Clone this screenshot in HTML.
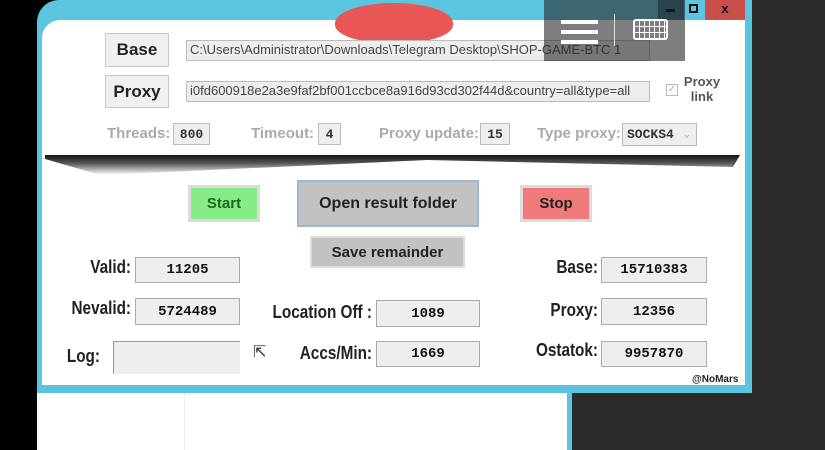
<!DOCTYPE html>
<html><head><meta charset="utf-8"><style>
*{margin:0;padding:0;box-sizing:border-box}
body{width:825px;height:450px;overflow:hidden;background:#000;position:relative;font-family:"Liberation Sans",Arial,sans-serif}
.a{position:absolute}
.btn{position:absolute;background:#f0f0f0;border:1px solid #c8c8c8;font-weight:bold;color:#222;display:flex;align-items:center;justify-content:center}
.inp{position:absolute;background:#ededed;border:1px solid #bbb;font-size:13px;color:#444;line-height:18px;padding-left:3px;white-space:nowrap;overflow:hidden}
.lbl{position:absolute;color:#aaa;font-weight:bold;font-size:15px}
.sm{position:absolute;background:#eee;border:1px solid #bbb;font-family:"Liberation Mono",monospace;font-weight:bold;font-size:13px;color:#333;display:flex;align-items:center;justify-content:center}
.big{position:absolute;font-size:18px;font-weight:bold;color:#222;transform:scaleX(0.85);transform-origin:right center;text-align:right;white-space:nowrap}
.num{position:absolute;background:#eee;border:1px solid #aaa;font-family:"Liberation Mono",monospace;font-weight:bold;font-size:14px;color:#111;display:flex;align-items:center;justify-content:center}
</style></head><body>
<div class="a" style="left:570px;top:0;width:255px;height:450px;background:#2b2a2b"></div>
<div class="a" style="left:37px;top:0;width:715px;height:393px;background:#5bc4de;border-radius:22px 0 0 0"></div>
<div class="a" style="left:42px;top:20px;width:703px;height:365px;background:#fff;border-radius:18px 0 0 0"></div>
<div class="a" style="left:37px;top:393px;width:535px;height:57px;background:#fff;border-right:5px solid #5bc4de"></div>
<div class="a" style="left:184px;top:393px;width:1px;height:57px;background:#eee"></div>
<div class="a" style="left:335px;top:3px;width:118px;height:40px;background:#e85656;border-radius:50% 50% 45% 45%"></div>

<div class="btn" style="left:105px;top:33px;width:64px;height:34px;font-size:17px">Base</div>
<div class="btn" style="left:105px;top:75px;width:64px;height:33px;font-size:17px">Proxy</div>
<div class="inp" style="left:186px;top:40px;width:464px;height:21px">C:\Users\Administrator\Downloads\Telegram Desktop\SHOP-GAME-BTC 1</div>
<div class="inp" style="left:186px;top:81px;width:464px;height:21px">i0fd600918e2a3e9faf2bf001ccbce8a916d93cd302f44d&amp;country=all&amp;type=all</div>
<div class="a" style="left:666px;top:84px;width:12px;height:12px;border:1px solid #bbb;color:#aaa;font-size:10px;line-height:10px;text-align:center">✓</div>
<div class="a" style="left:682px;top:74px;width:40px;color:#555;font-size:13px;font-weight:bold;text-align:center;line-height:15px">Proxy<br>link</div>

<div class="lbl" style="left:107px;top:125px">Threads:</div>
<div class="sm" style="left:173px;top:123px;width:37px;height:22px">800</div>
<div class="lbl" style="left:251px;top:125px">Timeout:</div>
<div class="sm" style="left:318px;top:123px;width:23px;height:22px">4</div>
<div class="lbl" style="left:379px;top:125px">Proxy update:</div>
<div class="sm" style="left:480px;top:123px;width:30px;height:22px">15</div>
<div class="lbl" style="left:537px;top:125px">Type proxy:</div>
<div class="sm" style="left:622px;top:123px;width:75px;height:23px;justify-content:flex-start;padding-left:4px">SOCKS4 <span style="color:#aaa;margin-left:10px;font-size:10px">⌄</span></div>

<div class="a" style="left:45px;top:155px;width:695px;height:20px;background:linear-gradient(#111,#555 40%,#fff);clip-path:polygon(0 0,100% 0,99% 60%,55% 25%,8% 100%,0 20%)"></div>

<div class="btn" style="left:188px;top:185px;width:72px;height:37px;background:#86ec86;border:3px solid #dcdcdc;color:#1b6a1b;font-size:15px">Start</div>
<div class="btn" style="left:297px;top:180px;width:182px;height:47px;background:#c2c2c2;border:2px solid #9ab8d8;font-size:16px">Open result folder</div>
<div class="btn" style="left:520px;top:185px;width:72px;height:37px;background:#f07a7a;border:3px solid #dcdcdc;font-size:15px">Stop</div>
<div class="btn" style="left:310px;top:236px;width:155px;height:32px;background:#c2c2c2;border:2px solid #ddd;font-size:15px">Save remainder</div>

<div class="big" style="right:694px;top:257px">Valid:</div>
<div class="num" style="left:135px;top:257px;width:105px;height:26px">11205</div>
<div class="big" style="right:694px;top:298px">Nevalid:</div>
<div class="num" style="left:135px;top:298px;width:105px;height:27px">5724489</div>
<div class="big" style="right:725px;top:346px">Log:</div>
<div class="a" style="left:113px;top:341px;width:127px;height:33px;background:#eee;border:1px solid #999;border-right:none;border-bottom:none"></div>
<div class="a" style="left:253px;top:342px;font-size:16px;color:#333">⇱</div>
<div class="big" style="right:453px;top:302px">Location Off :</div>
<div class="num" style="left:376px;top:300px;width:104px;height:27px">1089</div>
<div class="big" style="right:453px;top:343px">Accs/Min:</div>
<div class="num" style="left:376px;top:341px;width:104px;height:26px">1669</div>
<div class="big" style="right:227px;top:257px">Base:</div>
<div class="num" style="left:601px;top:257px;width:106px;height:26px">15710383</div>
<div class="big" style="right:227px;top:300px">Proxy:</div>
<div class="num" style="left:601px;top:298px;width:106px;height:27px">12356</div>
<div class="big" style="right:227px;top:340px">Ostatok:</div>
<div class="num" style="left:601px;top:341px;width:106px;height:26px">9957870</div>
<div class="a" style="left:692px;top:374px;font-size:10px;font-weight:bold;color:#222">@NoMars</div>

<div class="a" style="left:658px;top:0;width:25px;height:20px;background:#2a6f86"></div>
<div class="a" style="left:666px;top:9px;width:9px;height:3px;background:#000"></div>
<div class="a" style="left:683px;top:0;width:22px;height:20px;background:#5bc4de;border-left:1px solid #2a6f86"></div>
<div class="a" style="left:689px;top:4px;width:9px;height:9px;border:2px solid #111"></div>
<div class="a" style="left:705px;top:0;width:40px;height:20px;background:#c9504a;color:#111;font-weight:bold;font-size:13px;text-align:center;line-height:17px">x</div>
<div class="a" style="left:544px;top:0;width:141px;height:61px;background:rgba(40,40,40,0.6)"></div>
<div class="a" style="left:561px;top:20px;width:37px;height:4px;background:#fff"></div>
<div class="a" style="left:561px;top:30px;width:37px;height:4px;background:#fff"></div>
<div class="a" style="left:561px;top:40px;width:37px;height:4px;background:#fff"></div>
<div class="a" style="left:614px;top:14px;width:1px;height:32px;background:#ddd"></div>
<div class="a" style="left:633px;top:19px;width:35px;height:21px;border:2px solid #fff;border-radius:3px;background:repeating-linear-gradient(90deg,transparent 0 4px,#fff 4px 5px),repeating-linear-gradient(0deg,transparent 0 5px,#fff 5px 6px)"></div>
</body></html>
